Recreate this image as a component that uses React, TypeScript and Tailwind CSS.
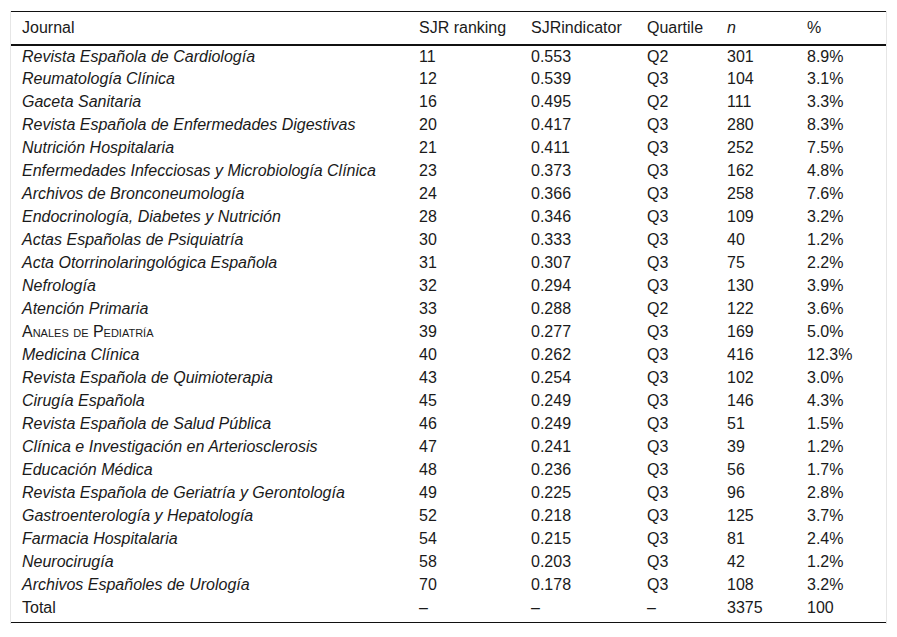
import React from 'react';

type Row = {
  journal: string;
  rank: string;
  indicator: string;
  quartile: string;
  n: string;
  pct: string;
  smallCaps?: boolean;
};

const rows: Row[] = [
  { journal: 'Revista Española de Cardiología', rank: '11', indicator: '0.553', quartile: 'Q2', n: '301', pct: '8.9%' },
  { journal: 'Reumatología Clínica', rank: '12', indicator: '0.539', quartile: 'Q3', n: '104', pct: '3.1%' },
  { journal: 'Gaceta Sanitaria', rank: '16', indicator: '0.495', quartile: 'Q2', n: '111', pct: '3.3%' },
  { journal: 'Revista Española de Enfermedades Digestivas', rank: '20', indicator: '0.417', quartile: 'Q3', n: '280', pct: '8.3%' },
  { journal: 'Nutrición Hospitalaria', rank: '21', indicator: '0.411', quartile: 'Q3', n: '252', pct: '7.5%' },
  { journal: 'Enfermedades Infecciosas y Microbiología Clínica', rank: '23', indicator: '0.373', quartile: 'Q3', n: '162', pct: '4.8%' },
  { journal: 'Archivos de Bronconeumología', rank: '24', indicator: '0.366', quartile: 'Q3', n: '258', pct: '7.6%' },
  { journal: 'Endocrinología, Diabetes y Nutrición', rank: '28', indicator: '0.346', quartile: 'Q3', n: '109', pct: '3.2%' },
  { journal: 'Actas Españolas de Psiquiatría', rank: '30', indicator: '0.333', quartile: 'Q3', n: '40', pct: '1.2%' },
  { journal: 'Acta Otorrinolaringológica Española', rank: '31', indicator: '0.307', quartile: 'Q3', n: '75', pct: '2.2%' },
  { journal: 'Nefrología', rank: '32', indicator: '0.294', quartile: 'Q3', n: '130', pct: '3.9%' },
  { journal: 'Atención Primaria', rank: '33', indicator: '0.288', quartile: 'Q2', n: '122', pct: '3.6%' },
  { journal: 'Anales de Pediatría', rank: '39', indicator: '0.277', quartile: 'Q3', n: '169', pct: '5.0%', smallCaps: true },
  { journal: 'Medicina Clínica', rank: '40', indicator: '0.262', quartile: 'Q3', n: '416', pct: '12.3%' },
  { journal: 'Revista Española de Quimioterapia', rank: '43', indicator: '0.254', quartile: 'Q3', n: '102', pct: '3.0%' },
  { journal: 'Cirugía Española', rank: '45', indicator: '0.249', quartile: 'Q3', n: '146', pct: '4.3%' },
  { journal: 'Revista Española de Salud Pública', rank: '46', indicator: '0.249', quartile: 'Q3', n: '51', pct: '1.5%' },
  { journal: 'Clínica e Investigación en Arteriosclerosis', rank: '47', indicator: '0.241', quartile: 'Q3', n: '39', pct: '1.2%' },
  { journal: 'Educación Médica', rank: '48', indicator: '0.236', quartile: 'Q3', n: '56', pct: '1.7%' },
  { journal: 'Revista Española de Geriatría y Gerontología', rank: '49', indicator: '0.225', quartile: 'Q3', n: '96', pct: '2.8%' },
  { journal: 'Gastroenterología y Hepatología', rank: '52', indicator: '0.218', quartile: 'Q3', n: '125', pct: '3.7%' },
  { journal: 'Farmacia Hospitalaria', rank: '54', indicator: '0.215', quartile: 'Q3', n: '81', pct: '2.4%' },
  { journal: 'Neurocirugía', rank: '58', indicator: '0.203', quartile: 'Q3', n: '42', pct: '1.2%' },
  { journal: 'Archivos Españoles de Urología', rank: '70', indicator: '0.178', quartile: 'Q3', n: '108', pct: '3.2%' },
];

const cell = 'pl-[11px] h-[23px] p-0 align-middle whitespace-nowrap';
const head = `${cell} h-[33px] text-left font-normal`;
const last = `${cell} h-[26px] pb-[3px]`;

export default function App() {
  return (
    <div className="w-[897px] h-[637px] bg-white pt-[11px] [font-family:Liberation_Sans,Arial,sans-serif] text-[16px] leading-[18px] text-[#1a1a1a]">
      <div className="ml-[10px] w-[877px] border-x border-[#e6e6e6] pb-[1px]">
        <table className="w-[875px] table-fixed border-collapse border-y border-[#111]">
          <colgroup>
            <col className="w-[397px]" />
            <col className="w-[112px]" />
            <col className="w-[116px]" />
            <col className="w-[80px]" />
            <col className="w-[80px]" />
            <col className="w-[90px]" />
          </colgroup>
          <thead>
            <tr className="border-b-2 border-[#111]">
              <th className={head}>Journal</th>
              <th className={head}>SJR ranking</th>
              <th className={head}>SJRindicator</th>
              <th className={head}>Quartile</th>
              <th className={`${head} italic`}>n</th>
              <th className={head}>%</th>
            </tr>
          </thead>
          <tbody>
            {rows.map((r) => (
              <tr key={r.journal}>
                <td className={`${cell} ${r.smallCaps ? '[font-variant:small-caps]' : 'italic'}`}>{r.journal}</td>
                <td className={cell}>{r.rank}</td>
                <td className={cell}>{r.indicator}</td>
                <td className={cell}>{r.quartile}</td>
                <td className={cell}>{r.n}</td>
                <td className={cell}>{r.pct}</td>
              </tr>
            ))}
            <tr>
              <td className={last}>Total</td>
              <td className={last}>–</td>
              <td className={last}>–</td>
              <td className={last}>–</td>
              <td className={last}>3375</td>
              <td className={last}>100</td>
            </tr>
          </tbody>
        </table>
      </div>
    </div>
  );
}
